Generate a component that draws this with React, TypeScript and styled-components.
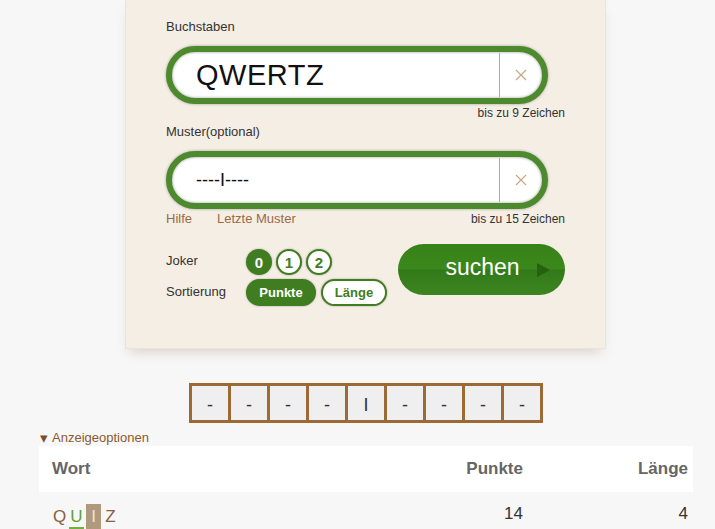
import React, { useState } from 'react';
import styled, { createGlobalStyle } from 'styled-components';

const GlobalStyle = createGlobalStyle`
  html, body {
    margin: 0;
    padding: 0;
    background: #f7f7f7;
    font-family: "Liberation Sans", Arial, sans-serif;
  }
`;

const Page = styled.div`
  width: 654px;
  margin-left: 39px;
`;

const Card = styled.div`
  width: 481px;
  box-sizing: border-box;
  margin-left: 86px;
  padding: 19px 40px 0 41px;
  height: 349px;
  background: #f5eee5;
  border: 1px solid #ece3d6;
  border-top: none;
  box-shadow: 0 7px 12px -5px rgba(120, 100, 70, 0.28);
`;

const Label = styled.div`
  font-size: 13px;
  color: #333;
  line-height: 16px;
  margin-left: -1px;
`;

const InputRing = styled.div`
  margin-top: 11px;
  width: 382px;
  height: 58px;
  box-sizing: border-box;
  border: 6px solid #4c8a2d;
  border-radius: 30px;
  background: #fff;
  display: flex;
  align-items: stretch;
  overflow: hidden;
  margin-left: -1px;
  box-shadow: 0 0 3px rgba(0, 0, 0, 0.35), inset 0 0 3px rgba(0, 0, 0, 0.4);
`;

const Field = styled.div<{ $big?: boolean }>`
  flex: 1;
  display: flex;
  align-items: center;
  padding-left: 24px;
  font-size: ${(p) => (p.$big ? '29px' : '18px')};
  color: #111;
  letter-spacing: ${(p) => (p.$big ? '0.5px' : '0')};
`;

const Clear = styled.div`
  width: 42px;
  margin: 1px 0;
  border-left: 1px solid #c9a47e;
  display: flex;
  align-items: center;
  justify-content: center;
`;

const HelpRow = styled.div`
  display: flex;
  justify-content: space-between;
  align-items: baseline;
  font-size: 12px;
  line-height: 15px;
  margin-top: 2px;
  color: #333;
`;

const HelpLinks = styled.div`
  display: flex;
  gap: 25px;
  font-size: 13px;
  color: #9a6a46;
  margin-left: -1px;
`;

const Hint = styled.div`
  margin-left: auto;
`;

const Spacer = styled.div<{ $h: number }>`
  height: ${(p) => p.$h}px;
`;

const Controls = styled.div`
  display: flex;
  justify-content: space-between;
  align-items: flex-start;
`;

const OptionGrid = styled.div`
  display: grid;
  grid-template-columns: 80px auto;
  row-gap: 4px;
  align-items: center;
  margin-left: -1px;
`;

const OptionLabel = styled.div`
  font-size: 13px;
  color: #333;
  margin-top: -3px;
`;

const Chips = styled.div<{ $gap: number }>`
  display: flex;
  gap: ${(p) => p.$gap}px;
`;

const Circle = styled.button<{ $on?: boolean }>`
  width: 26px;
  height: 26px;
  box-sizing: border-box;
  border-radius: 50%;
  padding: 0;
  border: 2px solid #3f7d20;
  background: ${(p) => (p.$on ? '#3f7d20' : '#fff')};
  color: ${(p) => (p.$on ? '#fff' : '#3f7d20')};
  font-family: "Liberation Sans", Arial, sans-serif;
  font-weight: bold;
  font-size: 15px;
  box-shadow: 0 0 2px rgba(0, 0, 0, 0.35);
`;

const Pill = styled.button<{ $on?: boolean; $w: number }>`
  width: ${(p) => p.$w}px;
  height: 27px;
  box-sizing: border-box;
  border-radius: 14px;
  padding: 0;
  border: 2px solid #3f7d20;
  background: ${(p) => (p.$on ? '#3f7d20' : '#fff')};
  color: ${(p) => (p.$on ? '#fff' : '#3f7d20')};
  font-family: "Liberation Sans", Arial, sans-serif;
  font-weight: bold;
  font-size: 13px;
  box-shadow: 0 0 2px rgba(0, 0, 0, 0.35);
`;

const SearchButton = styled.button`
  margin-top: -5px;
  width: 167px;
  height: 51px;
  border: none;
  border-radius: 26px;
  background: linear-gradient(#378218 0%, #3b881c 48%, #33791a 52%, #3d8521 100%);
  color: #fff;
  font-family: "Liberation Sans", Arial, sans-serif;
  font-size: 23px;
  display: flex;
  align-items: center;
  justify-content: center;
  gap: 17px;
  padding: 0 0 4px 32px;
`;

const Arrow = styled.span`
  width: 0;
  height: 0;
  margin-top: 4px;
  border-top: 7px solid transparent;
  border-bottom: 7px solid transparent;
  border-left: 13px solid #27600e;
`;

const PatternRow = styled.div`
  margin: 34px auto 0;
  display: flex;
  width: max-content;
  border: 3px solid #9c6a37;
  border-right: none;
`;

const PatternCell = styled.div`
  width: 39px;
  height: 34px;
  border-right: 3px solid #9c6a37;
  background: #efefef;
  display: flex;
  align-items: center;
  justify-content: center;
  padding-top: 4px;
  box-sizing: border-box;
  font-size: 18px;
  color: #333;
`;

const Toggle = styled.div`
  margin-top: 7px;
  margin-left: 1px;
  font-size: 13px;
  color: #8b5a2e;
  line-height: 16px;
  display: flex;
  align-items: center;
  gap: 4px;
`;

const Caret = styled.span`
  font-size: 15px;
  line-height: 16px;
  color: #7a4f28;
`;

const TableRow = styled.div<{ $head?: boolean }>`
  display: grid;
  grid-template-columns: 1fr 100px 165px;
  padding: 0 5px 0 13px;
  height: ${(p) => (p.$head ? '46px' : '44px')};
  align-items: center;
  background: ${(p) => (p.$head ? '#fff' : 'transparent')};
  font-size: 17px;
  color: ${(p) => (p.$head ? '#666' : '#333')};
  font-weight: ${(p) => (p.$head ? 'bold' : 'normal')};
`;

const Num = styled.div`
  text-align: right;
`;

const Word = styled.div`
  display: flex;
  gap: 2px;
  padding-top: 5px;
`;

const Letter = styled.span<{ $kind?: 'joker' | 'pattern' }>`
  display: inline-block;
  box-sizing: border-box;
  width: 15px;
  height: 25px;
  text-align: center;
  line-height: 25px;
  color: ${(p) => (p.$kind === 'joker' ? '#5ba22e' : p.$kind === 'pattern' ? '#ece4d8' : '#8b6040')};
  background: ${(p) => (p.$kind === 'pattern' ? '#b09a7d' : 'transparent')};
  border-bottom: 2px solid ${(p) => (p.$kind === 'joker' ? '#6ab43a' : 'transparent')};
`;

function ClearIcon() {
  return (
    <svg width="12" height="12" viewBox="0 0 12 12">
      <path d="M1 1 L11 11 M11 1 L1 11" stroke="#c8a688" strokeWidth="1.2" fill="none" />
    </svg>
  );
}

export default function App() {
  const [joker, setJoker] = useState(0);
  const [sort, setSort] = useState('Punkte');
  const pattern = ['-', '-', '-', '-', 'I', '-', '-', '-', '-'];

  return (
    <Page>
      <GlobalStyle />
      <Card>
        <Label>Buchstaben</Label>
        <InputRing>
          <Field $big>QWERTZ</Field>
          <Clear>
            <ClearIcon />
          </Clear>
        </InputRing>
        <HelpRow>
          <Hint>bis zu 9 Zeichen</Hint>
        </HelpRow>
        <Spacer $h={3} />
        <Label>Muster(optional)</Label>
        <InputRing>
          <Field>----I----</Field>
          <Clear>
            <ClearIcon />
          </Clear>
        </InputRing>
        <HelpRow>
          <HelpLinks>
            <span>Hilfe</span>
            <span>Letzte Muster</span>
          </HelpLinks>
          <Hint>bis zu 15 Zeichen</Hint>
        </HelpRow>
        <Spacer $h={22} />
        <Controls>
          <OptionGrid>
            <OptionLabel>Joker</OptionLabel>
            <Chips $gap={4}>
              {[0, 1, 2].map((n) => (
                <Circle key={n} type="button" $on={joker === n} onClick={() => setJoker(n)}>
                  {n}
                </Circle>
              ))}
            </Chips>
            <OptionLabel>Sortierung</OptionLabel>
            <Chips $gap={5}>
              <Pill type="button" $w={70} $on={sort === 'Punkte'} onClick={() => setSort('Punkte')}>
                Punkte
              </Pill>
              <Pill type="button" $w={66} $on={sort === 'Länge'} onClick={() => setSort('Länge')}>
                Länge
              </Pill>
            </Chips>
          </OptionGrid>
          <SearchButton type="button">
            suchen
            <Arrow />
          </SearchButton>
        </Controls>
      </Card>
      <PatternRow>
        {pattern.map((c, i) => (
          <PatternCell key={i}>{c}</PatternCell>
        ))}
      </PatternRow>
      <Toggle>
        <Caret>▾</Caret>
        Anzeigeoptionen
      </Toggle>
      <TableRow $head>
        <div>Wort</div>
        <Num>Punkte</Num>
        <Num>Länge</Num>
      </TableRow>
      <TableRow>
        <Word>
          <Letter>Q</Letter>
          <Letter $kind="joker">U</Letter>
          <Letter $kind="pattern">I</Letter>
          <Letter>Z</Letter>
        </Word>
        <Num>14</Num>
        <Num>4</Num>
      </TableRow>
    </Page>
  );
}
